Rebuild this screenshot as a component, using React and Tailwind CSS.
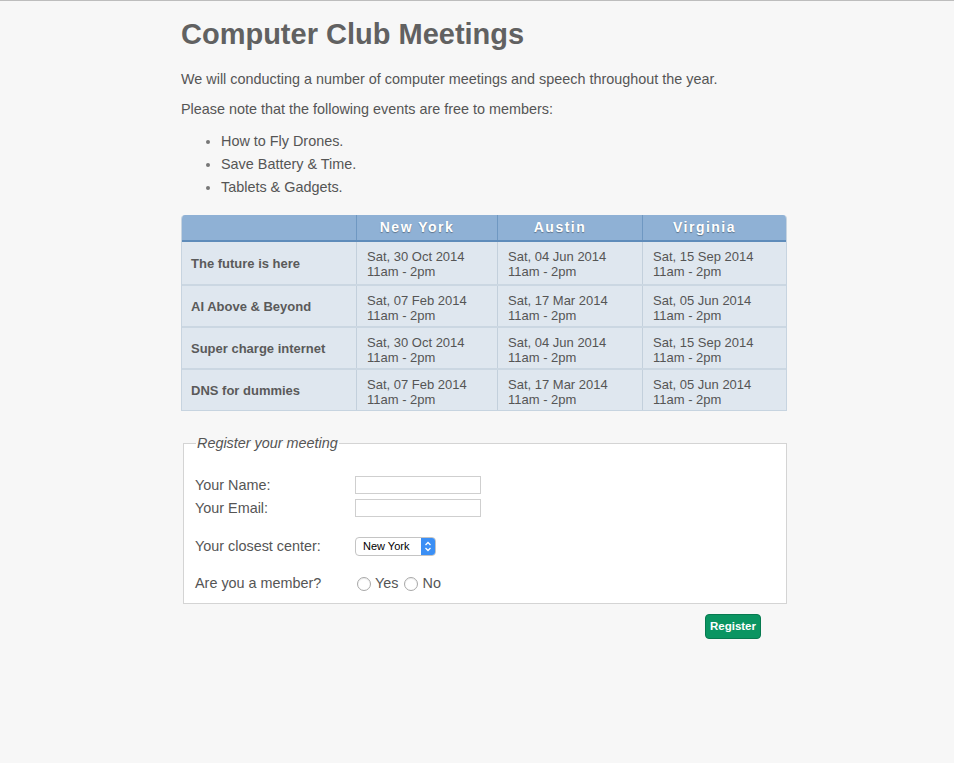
import React from 'react'

const CITIES = ['New York', 'Austin', 'Virginia']

const MEETINGS = [
  { title: 'The future is here', dates: ['Sat, 30 Oct 2014', 'Sat, 04 Jun 2014', 'Sat, 15 Sep 2014'] },
  { title: 'AI Above & Beyond', dates: ['Sat, 07 Feb 2014', 'Sat, 17 Mar 2014', 'Sat, 05 Jun 2014'] },
  { title: 'Super charge internet', dates: ['Sat, 30 Oct 2014', 'Sat, 04 Jun 2014', 'Sat, 15 Sep 2014'] },
  { title: 'DNS for dummies', dates: ['Sat, 07 Feb 2014', 'Sat, 17 Mar 2014', 'Sat, 05 Jun 2014'] },
]

const EVENTS = ['How to Fly Drones.', 'Save Battery & Time.', 'Tablets & Gadgets.']

function Radio({ label }) {
  return (
    <label className="flex items-center gap-[4px]">
      <span className="w-[14px] h-[14px] rounded-full border border-[#a8a8a8] bg-white shadow-[inset_0_1px_1px_rgba(0,0,0,0.08)]" />
      <span>{label}</span>
    </label>
  )
}

export default function App() {
  return (
    <div className="min-h-[763px] bg-[#f7f7f7] border-t border-[#bdbdbd] text-[#555] font-['Liberation_Sans',Arial,sans-serif]">
      <div className="w-[606px] ml-[181px]">
        {/* Header */}
        <h1 className="text-[29px] leading-[34px] font-bold text-[#616161] pt-[16px]">Computer Club Meetings</h1>
        <p className="text-[14.4px] leading-[18px] mt-[19px]">
          We will conducting a number of computer meetings and speech throughout the year.
        </p>
        <p className="text-[14.4px] leading-[18px] mt-[12px]">
          Please note that the following events are free to members:
        </p>
        <ul className="list-disc pl-[40px] mt-[12px] text-[14.4px] leading-[23px] marker:text-[#777]">
          {EVENTS.map((e) => (
            <li key={e}>{e}</li>
          ))}
        </ul>

        {/* Schedule table */}
        <div className="mt-[16px] rounded-t-[4px] overflow-hidden border-x border-b border-[#c7d4e0]">
          <div className="grid grid-cols-[174px_141px_145px_1fr] bg-[#8fb1d5] border-b-2 border-[#5f8cba] h-[27px]">
            <div />
            {CITIES.map((c) => (
              <div
                key={c}
                className="border-l border-[#6f98c2] flex items-center justify-center pr-[20px] text-white font-bold text-[14px] tracking-[1.5px] [text-shadow:0_1px_1px_rgba(0,0,0,0.35)]"
              >
                {c}
              </div>
            ))}
          </div>
          {MEETINGS.map((m, i) => (
            <div
              key={m.title}
              className={`grid grid-cols-[174px_141px_145px_1fr] bg-[#dfe7ef] h-[42px] text-[13px] leading-[15px] ${
                i > 0 ? 'border-t-2 border-[#cbd7e2]' : ''
              }`}
            >
              <div className="flex items-center pl-[9px] font-bold text-[#5a5a5a]">{m.title}</div>
              {m.dates.map((d, j) => (
                <div key={j} className="border-l border-[#c3d0dc] pl-[10px] pt-[7px]">
                  <div>{d}</div>
                  <div>11am - 2pm</div>
                </div>
              ))}
            </div>
          ))}
        </div>

        {/* Registration form */}
        <fieldset className="mt-[22px] ml-[2px] border border-[#d4d4d4] bg-white px-[11px] pb-[8px] text-[14.4px]">
          <legend className="italic px-[1px] ml-[1px] text-[#555]">Register your meeting</legend>
          <div className="grid grid-cols-[160px_1fr] gap-y-[5px] mt-[21px] items-center">
            <span className="leading-[18px]">Your Name:</span>
            <input className="w-[126px] h-[18px] border border-[#cfcfcf] bg-white" />
            <span className="leading-[18px]">Your Email:</span>
            <input className="w-[126px] h-[18px] border border-[#cfcfcf] bg-white" />
          </div>
          <div className="grid grid-cols-[160px_1fr] mt-[19px] items-center">
            <span>Your closest center:</span>
            <div className="w-[81px] h-[19px] flex border border-[#c4c4c4] rounded-[4px] bg-white overflow-hidden">
              <span className="flex-1 text-[11px] leading-[17px] text-black pl-[7px]">New York</span>
              <span className="w-[14px] bg-[#3b8ff5] flex items-center justify-center">
                <svg width="8" height="11" viewBox="0 0 8 11" fill="none" stroke="white" strokeWidth="1.3">
                  <path d="M1.5 4 L4 1.5 L6.5 4" />
                  <path d="M1.5 7 L4 9.5 L6.5 7" />
                </svg>
              </span>
            </div>
          </div>
          <div className="grid grid-cols-[160px_1fr] mt-[16px] items-center">
            <span>Are you a member?</span>
            <div className="flex items-center gap-[6px] pl-[2px]">
              <Radio label="Yes" />
              <Radio label="No" />
            </div>
          </div>
        </fieldset>
        <div className="flex justify-end pr-[26px] mt-[10px]">
          <button className="h-[25px] px-[4px] rounded-[4px] bg-[#0a9562] border border-[#077a50] text-white text-[11.5px] font-bold">
            Register
          </button>
        </div>
      </div>
    </div>
  )
}
